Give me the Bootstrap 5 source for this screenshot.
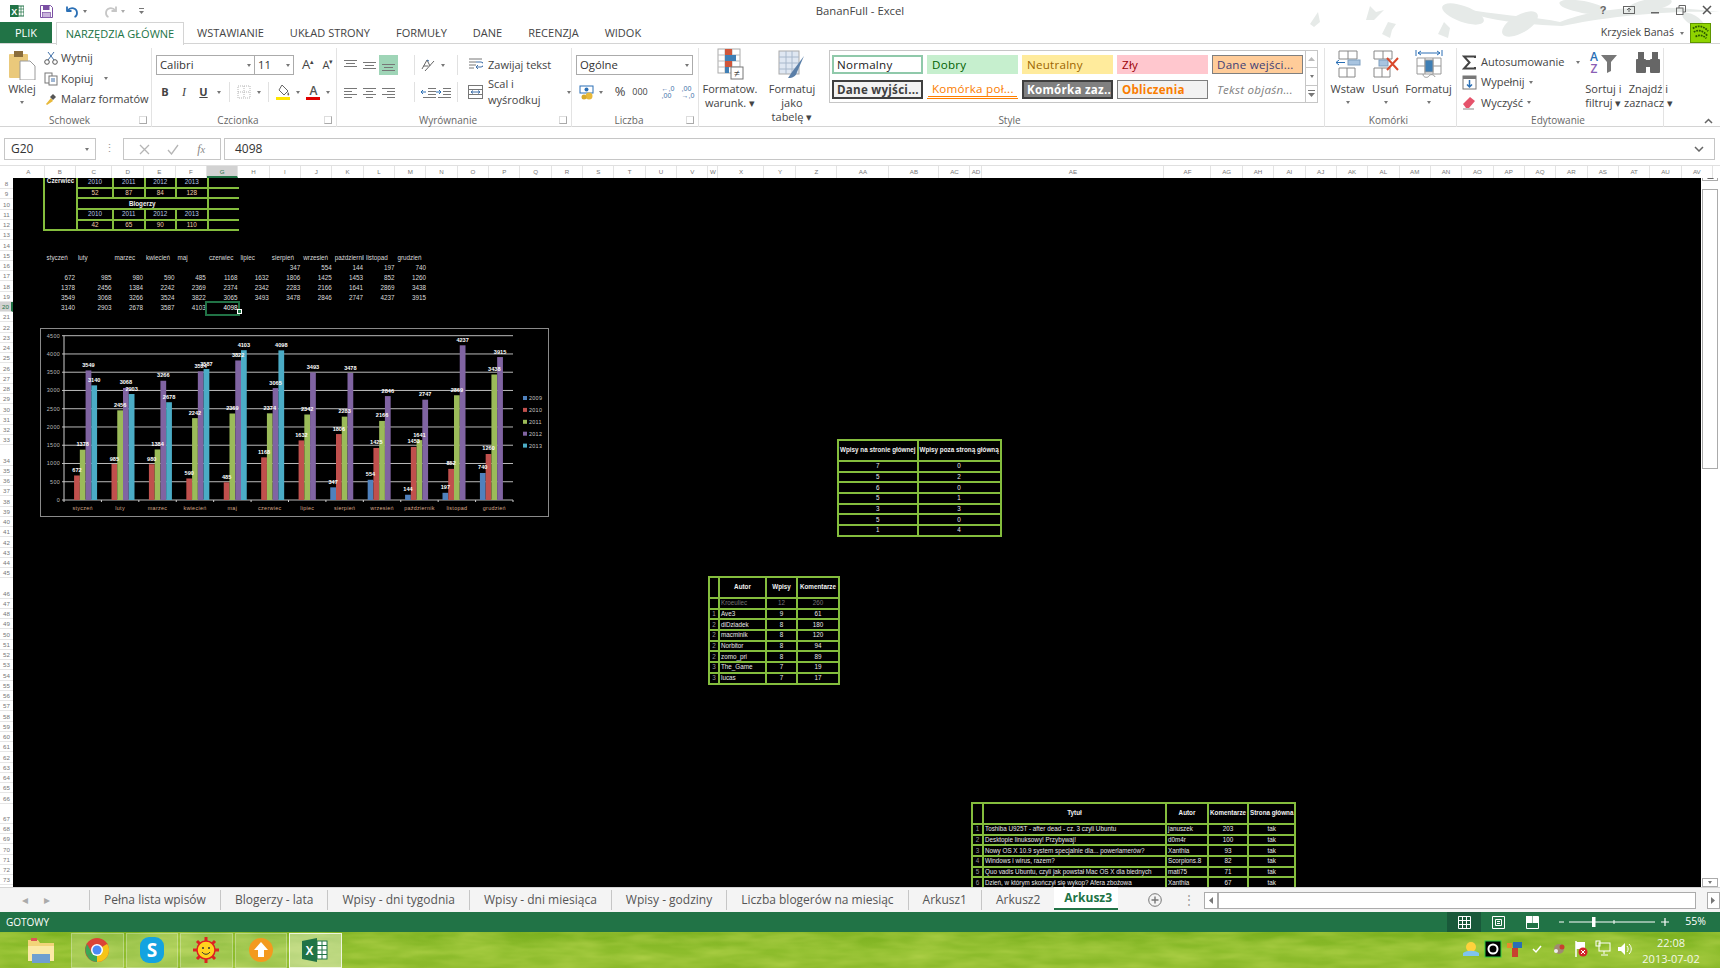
<!DOCTYPE html>
<html lang="pl">
<head>
<meta charset="UTF-8">
<title>BananFull - Excel</title>
<link href="https://cdn.jsdelivr.net/npm/bootstrap@5.3.0/dist/css/bootstrap.min.css" rel="stylesheet">
<style>
html,body{height:100%;overflow:hidden}
body{font-family:"Open Sans","Liberation Sans",sans-serif;font-size:11px;color:#444;background:#fff}
.app{width:1720px;height:968px}
svg{display:block;flex:none}

/* title bar */
.titlebar{height:22px;position:relative}
.leaves{position:absolute;right:0;top:0}
.qat{padding-left:10px;gap:0;position:relative}
.qat svg{margin-right:0}
.doc-title{position:absolute;left:0;right:0;top:3px;text-align:center;font-size:11.3px;color:#444}
.win-btns{position:absolute;right:6px;top:3px;gap:12px}
.win-btns svg{width:14px;height:14px}
.cr{width:0;height:0;border:2.5px solid transparent;border-top:3px solid #777;border-bottom:0;flex:none}
.cr-l{border-top-color:#aaa}

/* ribbon tabs */
.rtabs{height:22px;border-bottom:1px solid #d4d4d4;position:relative;font-size:11px}
.rtab-file{width:52px;background:#217346;color:#fff;text-align:center;line-height:22px;margin-right:4px}
.rtab-on{width:128px;height:23px;background:#fff;border:1px solid #d4d4d4;border-bottom:0;color:#217346;text-align:center;line-height:21px;margin-right:13px}
.rtab{line-height:22px;margin-right:26px;color:#444}
.user{position:absolute;right:9px;top:1px;gap:6px;color:#444;font-size:10.6px}
.avatar{width:21px;height:20px;background:#8fd400;border:1px solid #5f9600}

/* ribbon */
.ribbon{height:83px;border-bottom:1px solid #d4d4d4;font-size:11px}
.rg{height:79px;margin-top:4px;border-right:1px solid #e3e3e3;flex:none}
.rg-body{height:65px;overflow:visible}
.rg-label{height:14px;font-size:10px;line-height:14px;color:#666;padding-right:4px;align-items:center}
.launcher{width:8px;height:8px;border:1px solid #aaa;border-top-color:#ddd;border-left-color:#ddd;flex:none}
.g-clip{width:152px}.g-font{width:185px}.g-align{width:235px}.g-num{width:127px}.g-style{width:626px}.g-cell{width:132px}.g-edit{width:207px}
.bigbtn{line-height:14px;text-align:center;color:#444;align-items:center;flex:none}
.bigbtn svg{margin-bottom:2px}
.bigbtn .cr{margin-top:5px}
.b-paste{width:34px;margin-left:5px}
.b-fmt{width:62px}
.b-ins{width:38px}
.b-cellf{width:48px}
.smalls{margin-left:5px;padding-top:0}
.sm{height:20.5px;gap:3px;align-items:center;white-space:nowrap}
.rows{padding-top:7px;gap:7px;margin-left:4px}
.rrow{height:20px;align-items:center}
.combo{height:20px;border:1px solid #ababab;background:#fff;padding:0 3px;font-size:11.3px;color:#333;align-items:center;justify-content:space-between;flex:none}
.c-font{width:99px}.c-size{width:40px;margin-left:-1px}.c-num{width:117px}
.ic{height:20px;align-items:center;justify-content:center;flex:none;font-size:11px}
.w8{width:8px}.w10{width:10px}.w12{width:12px}.w14{width:14px}.w18{width:18px}.w19{width:19px}.w20{width:20px}.w24{width:24px}.w30{width:30px}
.on{background:#9fd5b7}
.vsep{width:1px;height:20px;background:#e1e1e1;flex:none}
.mx3{margin:0 3px}
.gallery{margin:2px 0 0 6px;width:489px;height:53px;border:1px solid #c6c6c6;flex:none}
.st-grid{display:grid;grid-template-columns:repeat(5,90.5px);grid-template-rows:19px 19px;gap:6px 4.5px;padding:4px 0 0 2px;width:476px}
.st{font-size:11.6px;line-height:17px;padding-left:4px;border:1px solid transparent;white-space:nowrap;overflow:hidden;letter-spacing:.25px}
.st-n{background:#fff;color:#222;border:2px solid #8fc9aa;line-height:15px;padding-left:3px}
.st-good{background:#c6efce;color:#006100}
.st-neu{background:#ffeb9c;color:#9c6500}
.st-bad{background:#ffc7ce;color:#9c0006}
.st-in{background:#ffcc99;color:#3f3f76;border-color:#7f7f7f}
.st-out{background:#f2f2f2;color:#3f3f3f;border:2px solid #3f3f3f;font-weight:700;line-height:15px;padding-left:3px}
.st-link{color:#fa7d00;border-bottom:3px double #ff8001;line-height:16px}
.st-chk{background:#808080;color:#fff;border:2px solid #3f3f3f;font-weight:700;line-height:15px;padding-left:3px}
.st-calc{background:#f2f2f2;color:#fa7d00;border-color:#7f7f7f;font-weight:700}
.st-exp{color:#7f7f7f;font-style:italic}
.scroller{width:12px;border-left:1px solid #c6c6c6;flex:none}
.scroller div{flex:1;border-bottom:1px solid #c6c6c6;align-items:center;justify-content:center}
.scroller div:last-child{border-bottom:0}
.sum{margin-left:5px}
.collapse-r{flex:1;align-items:flex-end;justify-content:flex-end;padding:0 7px 2px 0}

/* formula bar */
.fbar{height:39px;padding:11px 5px 6px 4px;border-bottom:1px solid #e0e0e0}
.fbox{height:22px;border:1px solid #c6c6c6;background:#fff;align-items:center;font-size:12px;color:#333}
.f-name{width:92px;padding:0 6px;justify-content:space-between}
.f-dots{width:27px;justify-content:center;color:#999;letter-spacing:0}
.f-btns{width:98px;justify-content:space-around;padding:0 6px;margin-right:3px;color:#888}
.f-val{flex:1;padding:0 10px;justify-content:space-between}

/* sheet */
.sheet{height:721px}
.colhead{height:12px;font:6.2px "Liberation Sans",sans-serif;color:#777;padding-left:13px;background:#fff}
.colhead div{height:12px;line-height:12px;text-align:center;border-right:1px solid #e3e3e3;flex:none}
.colhead .cur{background:#d2d2d2;border-bottom:2px solid #217346;color:#217346}
.rowhead{width:13px;font:6.2px "Liberation Sans",sans-serif;color:#777;background:#fff;overflow:hidden;flex:none}
.rowhead div{border-bottom:1px solid #e6e6e6;text-align:center;display:flex;align-items:flex-end;justify-content:center;line-height:9px;flex:none}
.rowhead .cur{background:#d2d2d2;border-right:2px solid #217346;color:#217346}
.canvas{flex:1;background:#000;position:relative;overflow:hidden}
.vscroll{width:19px;background:#fff;padding:0 2px 0 1px;flex:none;margin-top:-6px}
.vs-arrow{height:9px;border:1px solid #ababab;align-items:center;justify-content:center;flex:none}
.vs-track{flex:1;padding-top:8px}
.vs-thumb{height:280px;border:1px solid #ababab;background:#fff}

/* tables on the canvas */
.grid-t{position:absolute;table-layout:fixed;width:auto;--bs-table-bg:#000;--bs-table-color:#e8e8e8;--bs-table-border-color:#84bd3d;--bs-border-width:2px;font:6.3px/1 "Liberation Sans",sans-serif;margin:0}
.grid-t.table>:not(caption)>*>*{padding:0 1px;vertical-align:middle;text-align:center;overflow:hidden;white-space:nowrap;box-shadow:none}
.grid-t tr{height:10.7px}
.grid-t .hd{font-weight:700;white-space:normal;color:#f2f2f2}
.grid-t.table>:not(caption)>*>.tl{text-align:left}
.grid-t.table>:not(caption)>*>.idx{color:#999;text-align:center}
.grid-t.table>:not(caption)>*>.dim{color:#777}
.grid-t.table>:not(caption)>*>.y{color:#b9c9e6}
.grid-t.table>:not(caption)>*>.v{color:#f2cfa8}
#t1{left:30px;top:-2px}
#t1 col:nth-child(1){width:33px}
#t1 col:nth-child(2){width:36px}
#t1 col:nth-child(n+3){width:31.5px}
#t2{left:824px;top:261px}
#t2 col{width:51.5px}
#t2 .h{height:21px}
#t3{left:695px;top:398px}
#t3 col:nth-child(1){width:10px}
#t3 col:nth-child(2){width:47px}
#t3 col:nth-child(3){width:31px}
#t3 col:nth-child(4){width:42px}
#t3 .h{height:21px}
#t4{left:958px;top:624px}
#t4 col:nth-child(1){width:11px}
#t4 col:nth-child(2){width:183px}
#t4 col:nth-child(3){width:42px}
#t4 col:nth-child(4){width:39.5px}
#t4 col:nth-child(5){width:27px}
#t4 .h{height:21px}
.data-t{position:absolute;left:31.5px;top:75px;table-layout:fixed;border-collapse:collapse;font:6.3px "Liberation Sans",sans-serif;color:#dcdcdc}
.data-t td{height:10.1px;padding:0 1px;line-height:1;text-align:right;white-space:nowrap;overflow:hidden}
.data-t .m{text-align:left;padding-left:2px}
.data-t .sel{position:relative;outline:2px solid #217346;background:#000}
.data-t .sel{color:#fff}
.chart{position:absolute;left:27px;top:150px}
.handle{position:absolute;left:223.5px;top:131px;width:5px;height:5px;background:#217346;border:1px solid #fff}

/* sheet tabs */
.stabs{height:25px;background:#f4f4f4;font-size:12px;color:#555;border-top:1px solid #d4d4d4}
.s-nav{width:90px;height:20px;margin-top:2px;border-right:1px solid #c6c6c6;color:#aaa;gap:16px;padding-left:22px;align-items:center;flex:none}
.stab{padding:0 14px;height:20px;line-height:20px;margin-top:2px;border-right:1px solid #c6c6c6;white-space:nowrap;flex:none}
.stab-on{height:23px;margin-top:-1px;margin-left:0;padding:0 10px;width:64px;text-align:center;background:#fff;color:#217346;font-weight:700;border-bottom:2px solid #217346;line-height:22px;border-right:0;box-sizing:border-box}
.hs{height:17px;border:1px solid #ababab;background:#fff}
/* status bar */
.status{height:20px;background:#217346;color:#fff;font-size:10px;padding-left:6px;align-items:center}
.status .vw{width:34px;height:20px;align-items:center;justify-content:center;flex:none}
.vw-on{background:#19593a}
/* taskbar */
.taskbar{height:36px;position:relative;overflow:hidden;background:linear-gradient(180deg,#7bb01f,#8dbd2c 55%,#8ab82a)}
.grass{position:absolute;left:0;top:0}
.tb{position:relative;height:36px;padding-left:71px}
.tb-folder{position:absolute;left:27px;top:4px}
.tb-btn{width:52.5px;height:35px;margin:0.5px 2px 0 0;background:rgba(255,255,255,.16);border:1px solid rgba(255,255,255,.28);align-items:center;justify-content:center;flex:none}
.tb-on{background:rgba(255,255,255,.38);border-color:rgba(255,255,255,.75)}
.tray{position:absolute;left:1462px;top:8px;gap:4px;align-items:center}
.tray svg{width:18px;height:18px}
.clock{position:absolute;left:1640px;top:3px;width:62px;color:#f4f8e8;font-size:11px;line-height:16px;text-align:center;white-space:nowrap}
</style>
</head>
<body>
<div class="app d-flex flex-column">

  <!-- title bar -->
  <div class="titlebar">
    <svg class="leaves" width="420" height="44" viewBox="0 0 420 44" fill="#e6eae8">
      <path d="M10 24 18 12 20 22 14 27zM66 20 70 6 76 12 84 10 74 20zM82 34 88 22 96 24 92 30 90 38zM138 34 144 22 150 28 148 38zM322 6 430 14M160 8C200 16 230 16 260 22 290 10 340 2 420 12 360 10 300 18 262 26 220 24 180 20 160 8z"/>
      <ellipse cx="163" cy="14" rx="22" ry="8" transform="rotate(20 163 14)"/>
      <ellipse cx="220" cy="24" rx="20" ry="9" transform="rotate(-30 220 24)"/>
      <ellipse cx="283" cy="7" rx="24" ry="6" transform="rotate(10 283 7)"/>
      <ellipse cx="350" cy="5" rx="22" ry="6" transform="rotate(-10 350 5)"/>
      <ellipse cx="393" cy="20" rx="12" ry="5" transform="rotate(30 393 20)"/>
    </svg>
    <div class="qat d-flex align-items-center h-100">
      <svg width="14" height="14" viewBox="0 0 14 14"><rect x="4" y="2" width="10" height="10" fill="#fff" stroke="#217346"/><path d="M8 2v10M11 2v10M4 5h10M4 8h10" stroke="#217346" stroke-width=".7"/><rect y="1" width="8.5" height="12" fill="#217346"/><text x="4.2" y="10.5" font-size="9" font-weight="700" fill="#fff" text-anchor="middle" font-family="Liberation Sans">X</text></svg>
      <svg class="ms-3" style="margin-left:12px" width="13" height="13" viewBox="0 0 13 13"><path d="M.5.5h10l2 2v10H.5z" fill="#fff" stroke="#7a4fa3"/><rect x="3" y=".5" width="6.5" height="4.5" fill="#7a4fa3"/><rect x="2.5" y="7.5" width="8" height="5" fill="#c9b5dc" stroke="#7a4fa3" stroke-width=".7"/></svg>
      <svg style="margin-left:13px" width="13" height="13" viewBox="0 0 13 13" fill="none" stroke="#2a6fb5" stroke-width="1.8"><path d="M1.5 5.5C5 1.5 11 3 11 8c0 2-1 3.500-2.500 4"/><path d="M1 1.500v4.500h4.500" stroke-linejoin="round"/></svg>
      <span class="cr ms-1"></span>
      <svg style="margin-left:17px" width="13" height="13" viewBox="0 0 13 13" fill="none" stroke="#c6c6c6" stroke-width="1.8"><path d="M11.500 5.500C8 1.500 2 3 2 8c0 2 1 3.500 2.500 4"/><path d="M12 1.500v4.500H7.500"/></svg>
      <span class="cr cr-l ms-1"></span>
      <svg style="margin-left:13px" width="7" height="8" viewBox="0 0 7 8" fill="#777"><rect x="1" y="1" width="5" height="1"/><path d="M1 4h5L3.500 7z"/></svg>
    </div>
    <div class="doc-title">BananFull - Excel</div>
    <div class="win-btns d-flex">
      <svg viewBox="0 0 14 14"><text x="7" y="11" font-size="11" font-weight="700" fill="#666" text-anchor="middle" font-family="Liberation Sans">?</text></svg>
      <svg viewBox="0 0 14 14" fill="none" stroke="#666"><rect x="1.500" y="3.500" width="11" height="7"/><path d="M7 9V5.500M5 7l2-2 2 2"/></svg>
      <svg viewBox="0 0 14 14"><rect x="3" y="9" width="8" height="1.500" fill="#666"/></svg>
      <svg viewBox="0 0 14 14" fill="none" stroke="#666"><rect x="2.500" y="5" width="6.500" height="6.500"/><path d="M5 5V2.500h6.500V9H9"/></svg>
      <svg viewBox="0 0 14 14" stroke="#555" stroke-width="1.500"><path d="M3 3l8 8M11 3l-8 8"/></svg>
    </div>
  </div>

  <!-- ribbon tabs -->
  <div class="rtabs d-flex">
    <div class="rtab-file">PLIK</div>
    <div class="rtab-on">NARZĘDZIA GŁÓWNE</div>
    <div class="rtab">WSTAWIANIE</div>
    <div class="rtab">UKŁAD STRONY</div>
    <div class="rtab">FORMUŁY</div>
    <div class="rtab">DANE</div>
    <div class="rtab">RECENZJA</div>
    <div class="rtab">WIDOK</div>
    <div class="user d-flex align-items-center">Krzysiek Banaś <span class="cr"></span>
      <svg class="avatar" viewBox="0 0 21 20"><path d="M2 5c5-4 12-3 17 3M3 9c5-3 10-2 15 4M5 14c4-2 8-2 12 2" stroke="#2d5a00" stroke-width="2" fill="none" stroke-dasharray="2 1"/></svg>
    </div>
  </div>

  <!-- ribbon -->
  <div class="ribbon d-flex">
    <section class="rg g-clip d-flex flex-column">
      <div class="rg-body d-flex">
        <div class="bigbtn b-paste d-flex flex-column">
          <svg width="28" height="32" viewBox="0 0 28 32"><rect x="1" y="6" width="19" height="24" rx="1" fill="#eac97b"/><rect x="6" y="3" width="9" height="6" fill="#8a6d3b"/><path d="M12 13h10l5 5v14H12z" fill="#fff" stroke="#9a9a9a"/></svg>
          Wklej<span class="cr"></span>
        </div>
        <div class="smalls d-flex flex-column">
          <div class="sm d-flex"><svg width="14" height="14" viewBox="0 0 14 14" fill="none" stroke="#555"><path d="M4 1l6 8M10 1L4 9" stroke="#3f6fa8"/><circle cx="3" cy="11" r="2.300"/><circle cx="11" cy="11" r="2.300"/></svg>Wytnij</div>
          <div class="sm d-flex"><svg width="14" height="14" viewBox="0 0 14 14" fill="#fff" stroke="#777"><rect x="1" y="1" width="7" height="10"/><rect x="5" y="4" width="8" height="9"/><path d="M7 7h4M7 9h4" stroke="#3f6fa8"/></svg>Kopiuj<span class="cr ms-2"></span></div>
          <div class="sm d-flex"><svg width="14" height="14" viewBox="0 0 14 14"><path d="M7 6l-5 6 1 1 6-4z" fill="#e8b93a"/><path d="M6 5l3-3 3 3-3 3z" fill="#555"/></svg>Malarz formatów</div>
        </div>
      </div>
      <div class="rg-label d-flex"><span class="flex-grow-1 text-center">Schowek</span><span class="launcher"></span></div>
    </section>

    <section class="rg g-font d-flex flex-column">
      <div class="rg-body rows d-flex flex-column">
        <div class="rrow d-flex">
          <div class="combo c-font d-flex">Calibri<span class="cr"></span></div>
          <div class="combo c-size d-flex">11<span class="cr"></span></div>
          <div class="ic w20 d-flex ms-1" style="font-size:13px">A<sup style="font-size:7px">▴</sup></div>
          <div class="ic w20 d-flex" style="font-size:11px">A<sup style="font-size:7px">▾</sup></div>
        </div>
        <div class="rrow d-flex">
          <div class="ic w18 d-flex fw-bold">B</div>
          <div class="ic w20 d-flex fst-italic" style="font-family:'Liberation Serif',serif;font-size:12px">I</div>
          <div class="ic w19 d-flex fw-bold text-decoration-underline">U</div>
          <div class="ic w12 d-flex"><span class="cr"></span></div>
          <div class="vsep mx-1"></div>
          <div class="ic w20 d-flex"><svg width="14" height="14" viewBox="0 0 14 14" fill="none" stroke="#b5b5b5" stroke-dasharray="1 1"><rect x="1" y="1" width="12" height="12"/><path d="M7 1v12M1 7h12"/></svg></div>
          <div class="ic w10 d-flex"><span class="cr"></span></div>
          <div class="vsep mx-1"></div>
          <div class="ic w20 d-flex"><svg width="15" height="16" viewBox="0 0 15 16"><path d="M6 1l6 6-4 4-5-5z" fill="#fff" stroke="#666"/><path d="M12 8c1.500 2 1.500 3 .5 3.500S11 10 12 8z" fill="#666"/><rect y="13" width="14" height="3" fill="#ffe500"/></svg></div>
          <div class="ic w10 d-flex"><span class="cr"></span></div>
          <div class="ic w20 d-flex"><svg width="15" height="16" viewBox="0 0 15 16"><text x="7.500" y="11" font-size="12" font-weight="600" fill="#555" text-anchor="middle" font-family="Open Sans">A</text><rect y="13" width="14" height="3" fill="#e00000"/></svg></div>
          <div class="ic w10 d-flex"><span class="cr"></span></div>
        </div>
      </div>
      <div class="rg-label d-flex"><span class="flex-grow-1 text-center">Czcionka</span><span class="launcher"></span></div>
    </section>

    <section class="rg g-align d-flex flex-column">
      <div class="rg-body rows d-flex flex-column">
        <div class="rrow d-flex">
          <div class="ic w19 d-flex"><svg width="13" height="12" viewBox="0 0 13 12" stroke="#777"><path d="M0 1.500h13M2 4.500h9M0 7.500h13"/></svg></div>
          <div class="ic w19 d-flex"><svg width="13" height="12" viewBox="0 0 13 12" stroke="#777"><path d="M0 3.500h13M2 6.500h9M0 9.500h13"/></svg></div>
          <div class="ic w19 d-flex on"><svg width="13" height="12" viewBox="0 0 13 12" stroke="#777"><path d="M0 5.500h13M2 8.500h9M0 11.500h13"/></svg></div>
          <div class="ic w12 d-flex"></div>
          <div class="vsep mx-1"></div>
          <div class="ic w18 d-flex"><svg width="15" height="14" viewBox="0 0 15 14" fill="none" stroke="#666"><path d="M1 11l5-9 3 6M2.500 8h5M13 3L4 13"/><path d="M6 2l2 1M4 6h0" stroke="#3f6fa8"/></svg></div>
          <div class="ic w12 d-flex"><span class="cr"></span></div>
          <div class="vsep mx-2"></div>
          <div class="ic w18 d-flex"><svg width="15" height="14" viewBox="0 0 15 14" fill="none" stroke="#777"><path d="M1 1h13M1 4h7M1 7h7M1 10h5"/><path d="M8 4h5a2 2 0 010 5H8m2-2-2 2 2 2" stroke="#3f6fa8"/></svg></div>
          <span class="ms-1">Zawijaj tekst</span>
        </div>
        <div class="rrow d-flex">
          <div class="ic w19 d-flex"><svg width="13" height="11" viewBox="0 0 13 11" stroke="#777"><path d="M0 1.500h13M0 4.500h8M0 7.500h13M0 10.500h8"/></svg></div>
          <div class="ic w19 d-flex"><svg width="13" height="11" viewBox="0 0 13 11" stroke="#777"><path d="M0 1.500h13M3 4.500h7M0 7.500h13M3 10.500h7"/></svg></div>
          <div class="ic w19 d-flex"><svg width="13" height="11" viewBox="0 0 13 11" stroke="#777"><path d="M0 1.500h13M5 4.500h8M0 7.500h13M5 10.500h8"/></svg></div>
          <div class="ic w12 d-flex"></div>
          <div class="vsep mx-1"></div>
          <div class="ic w18 d-flex"><svg width="15" height="11" viewBox="0 0 15 11" fill="none" stroke="#777"><path d="M7 1.500h8M7 4.500h8M7 7.500h8M2 10.500h13"/><path d="M5 5H0m2-2L0 5l2 2" stroke="#2a6fb5"/></svg></div>
          <div class="ic w12 d-flex"><svg width="15" height="11" viewBox="0 0 15 11" fill="none" stroke="#777"><path d="M7 1.500h8M7 4.500h8M7 7.500h8M2 10.500h13"/><path d="M0 5h5M3 3l2 2-2 2" stroke="#2a6fb5"/></svg></div>
          <div class="vsep mx-2"></div>
          <div class="ic w18 d-flex"><svg width="15" height="14" viewBox="0 0 15 14" fill="#fff" stroke="#777"><rect x=".5" y=".5" width="14" height="13"/><path d="M.5 4.500h14M.5 9.500h14"/><path d="M3 7h9M5 5.500L3 7l2 1.500M10 5.500L12 7l-2 1.500" stroke="#3f6fa8" fill="none"/></svg></div>
          <span class="ms-1">Scal i wyśrodkuj</span><span class="cr ms-2"></span>
        </div>
      </div>
      <div class="rg-label d-flex"><span class="flex-grow-1 text-center">Wyrównanie</span><span class="launcher"></span></div>
    </section>

    <section class="rg g-num d-flex flex-column">
      <div class="rg-body rows d-flex flex-column">
        <div class="rrow d-flex"><div class="combo c-num d-flex">Ogólne<span class="cr"></span></div></div>
        <div class="rrow d-flex">
          <div class="ic w20 d-flex"><svg width="15" height="15" viewBox="0 0 15 15"><rect x="1" y="1" width="13" height="7" fill="#fff" stroke="#2a6fb5"/><circle cx="7.500" cy="4.500" r="2" fill="#2a6fb5"/><circle cx="10" cy="11" r="3.500" fill="#e8b93a"/><circle cx="5" cy="12" r="2.500" fill="#d8a92a"/></svg></div>
          <div class="ic w10 d-flex"><span class="cr"></span></div>
          <div class="ic w20 d-flex ms-1" style="font-size:13px">%</div>
          <div class="ic w20 d-flex" style="font-size:9px">000</div>
          <div class="ic w8 d-flex"></div>
          <div class="ic w20 d-flex" style="font:7px/7px 'Liberation Sans',sans-serif;color:#3f6fa8;flex-direction:column">←,0<br>,00</div>
          <div class="ic w20 d-flex" style="font:7px/7px 'Liberation Sans',sans-serif;color:#3f6fa8;flex-direction:column">,00<br>→,0</div>
        </div>
      </div>
      <div class="rg-label d-flex"><span class="flex-grow-1 text-center">Liczba</span><span class="launcher"></span></div>
    </section>

    <section class="rg g-style d-flex flex-column">
      <div class="rg-body d-flex">
        <div class="bigbtn b-fmt d-flex flex-column">
          <svg width="27" height="32" viewBox="0 0 27 32"><rect x="1" y="1" width="22" height="24" fill="#fff" stroke="#aaa"/><path d="M8 1v24M15 1v24M1 7h22M1 13h22M1 19h22" stroke="#bbb" fill="none"/><rect x="8" y="1" width="7" height="6" fill="#d0563a"/><rect x="8" y="7" width="11" height="6" fill="#3f7fb5"/><rect x="8" y="13" width="7" height="6" fill="#d0563a"/><rect x="8" y="19" width="4" height="6" fill="#3f7fb5"/><rect x="14" y="19" width="12" height="12" fill="#fff" stroke="#777"/><text x="20" y="29" font-size="10" fill="#444" text-anchor="middle" font-family="Liberation Sans">≠</text></svg>
          <span>Formatow.</span><span>warunk. ▾</span>
        </div>
        <div class="bigbtn b-fmt d-flex flex-column">
          <svg width="28" height="32" viewBox="0 0 28 32"><rect x="1" y="3" width="20" height="23" fill="#dfe7f2" stroke="#aaa"/><path d="M8 3v23M14 3v23M1 9h20M1 15h20M1 21h20" stroke="#a8b8cc" fill="none"/><path d="M26 8L14 24l-4 6c5 0 8-2 9-6z" fill="#5b7fa8"/></svg>
          <span>Formatuj jako</span><span>tabelę ▾</span>
        </div>
        <div class="gallery d-flex">
          <div class="st-grid">
            <div class="st st-n">Normalny</div><div class="st st-good">Dobry</div><div class="st st-neu">Neutralny</div><div class="st st-bad">Zły</div><div class="st st-in">Dane wejści...</div>
            <div class="st st-out">Dane wyjści...</div><div class="st st-link">Komórka poł...</div><div class="st st-chk">Komórka zaz...</div><div class="st st-calc">Obliczenia</div><div class="st st-exp">Tekst objaśn...</div>
          </div>
          <div class="scroller d-flex flex-column ms-auto">
            <div class="d-flex"><svg width="7" height="4" viewBox="0 0 7 4" fill="#bbb"><path d="M0 4l3.500-4L7 4z"/></svg></div>
            <div class="d-flex"><span class="cr"></span></div>
            <div class="d-flex"><svg width="7" height="7" viewBox="0 0 7 7" fill="#777"><rect width="7" height="1"/><path d="M0 3h7L3.500 7z"/></svg></div>
          </div>
        </div>
      </div>
      <div class="rg-label d-flex justify-content-center">Style</div>
    </section>

    <section class="rg g-cell d-flex flex-column">
      <div class="rg-body d-flex justify-content-center gap-0">
        <div class="bigbtn b-ins d-flex flex-column">
          <svg width="26" height="32" viewBox="0 0 26 32" fill="none" stroke="#888"><path d="M4 3h18v8H4zM13 3v8M4 20h16v9H4zM12 20v9"/><rect x="13" y="12" width="12" height="5" fill="#a8c4e0" stroke="#7f9fc0"/><path d="M1 14.500h9M4 12l-3 2.500 3 2.500" stroke="#2a6fb5"/></svg>
          Wstaw<span class="cr"></span>
        </div>
        <div class="bigbtn b-ins d-flex flex-column">
          <svg width="28" height="32" viewBox="0 0 28 32" fill="none" stroke="#888"><path d="M2 3h18v8H2zM11 3v8M2 20h16v9H2zM10 20v9"/><rect x="7" y="12" width="9" height="6" fill="#a8c4e0" stroke="#7f9fc0"/><path d="M15 10l11 12M26 10L15 22" stroke="#d9482b" stroke-width="2"/></svg>
          Usuń<span class="cr"></span>
        </div>
        <div class="bigbtn b-cellf d-flex flex-column">
          <svg width="28" height="32" viewBox="0 0 28 32" fill="none" stroke="#999"><path d="M1 2v6M27 2v6M3 5h22M3 5l3-2M3 5l3 2M25 5l-3-2M25 5l-3 2" stroke="#2a6fb5"/><path d="M2 10h24v16H2zM10 10v16M18 10v16M2 18h24"/><rect x="10" y="12" width="8" height="12" fill="#3f7fb5"/><path d="M8 26c0 4 5 4 6 2s5-2 6 1" /></svg>
          Formatuj<span class="cr"></span>
        </div>
      </div>
      <div class="rg-label d-flex justify-content-center">Komórki</div>
    </section>

    <section class="rg g-edit d-flex flex-column">
      <div class="rg-body d-flex">
        <div class="smalls sum d-flex flex-column" style="width:121px;padding-top:4px">
          <div class="sm d-flex" style="gap:4px"><svg width="15" height="15" viewBox="0 0 15 15" fill="none" stroke="#444" stroke-width="2"><path d="M13 3V1.500H2l5.500 6L2 13.500h11V12"/></svg>Autosumowanie<span class="cr ms-2"></span></div>
          <div class="sm d-flex" style="gap:4px"><svg width="15" height="15" viewBox="0 0 15 15"><rect x="1" y="1" width="13" height="13" fill="#fff" stroke="#777"/><rect x="1" y="1" width="13" height="3" fill="#777"/><path d="M7.500 5v7M5 9.500l2.500 2.500L10 9.500" stroke="#2a6fb5" stroke-width="1.500" fill="none"/></svg>Wypełnij<span class="cr"></span></div>
          <div class="sm d-flex" style="gap:4px"><svg width="15" height="15" viewBox="0 0 15 15"><path d="M1 9l7-7 5 4-6 7H4z" fill="#e5536b"/><path d="M1 14h11" stroke="#888"/></svg>Wyczyść<span class="cr"></span></div>
        </div>
        <div class="bigbtn d-flex flex-column w-auto" style="width:46px">
          <svg width="30" height="32" viewBox="0 0 30 32"><text x="6" y="13" font-size="12" font-weight="600" fill="#2a6fb5" text-anchor="middle" font-family="Open Sans">A</text><text x="6" y="25" font-size="12" font-weight="600" fill="#8a5fb5" text-anchor="middle" font-family="Open Sans">Z</text><path d="M13 7h16l-6 7v9l-4 2V14z" fill="#777"/></svg>
          <span style="width:46px">Sortuj i</span><span class="text-nowrap">filtruj ▾</span>
        </div>
        <div class="bigbtn d-flex flex-column" style="width:44px;margin-left:0">
          <svg width="26" height="32" viewBox="0 0 26 32" fill="#666"><rect x="1" y="11" width="10" height="14" rx="1"/><rect x="15" y="11" width="10" height="14" rx="1"/><rect x="3" y="4" width="6" height="8"/><rect x="17" y="4" width="6" height="8"/><rect x="10" y="12" width="6" height="7"/></svg>
          <span class="text-nowrap">Znajdź i</span><span class="text-nowrap">zaznacz ▾</span>
        </div>
      </div>
      <div class="rg-label d-flex justify-content-center">Edytowanie</div>
    </section>

    <div class="collapse-r d-flex"><svg width="9" height="6" viewBox="0 0 9 6" fill="none" stroke="#666" stroke-width="1.500"><path d="M1 5l3.500-3.500L8 5"/></svg></div>
  </div>

  <!-- formula bar -->
  <div class="fbar d-flex">
    <div class="fbox f-name d-flex">G20<span class="cr"></span></div>
    <div class="f-dots d-flex align-items-center">⋮</div>
    <div class="fbox f-btns d-flex">
      <svg width="11" height="11" viewBox="0 0 11 11" stroke="#b5b5b5" stroke-width="1.300"><path d="M1 1l9 9M10 1l-9 9"/></svg>
      <svg width="12" height="11" viewBox="0 0 12 11" fill="none" stroke="#b5b5b5" stroke-width="1.300"><path d="M1 6l3.500 4L11 1"/></svg>
      <span class="fst-italic" style="font-family:'Liberation Serif',serif">f<small>x</small></span>
    </div>
    <div class="fbox f-val d-flex">4098<svg width="10" height="6" viewBox="0 0 10 6" fill="none" stroke="#666" stroke-width="1.500"><path d="M1 1l4 4 4-4"/></svg></div>
  </div>

  <!-- sheet -->
  <div class="sheet d-flex flex-column">
    <div class="colhead d-flex" id="colhead"></div>
    <div class="d-flex flex-grow-1 overflow-hidden">
      <div class="rowhead d-flex flex-column" id="rowhead"></div>
      <div class="canvas" id="canvas">
        <table class="table table-bordered grid-t" id="t1">
          <colgroup><col><col><col><col><col><col></colgroup>
          <tbody>
            <tr><td rowspan="5" class="hd align-top">Czerwiec</td><td class="y">2010</td><td class="y">2011</td><td class="y">2012</td><td class="y">2013</td></tr>
            <tr><td class="v">52</td><td class="v">87</td><td class="v">84</td><td class="v">128</td></tr>
            <tr><td colspan="4" class="hd">Blogerzy</td></tr>
            <tr><td class="y">2010</td><td class="y">2011</td><td class="y">2012</td><td class="y">2013</td></tr>
            <tr><td class="v">42</td><td class="v">65</td><td class="v">90</td><td class="v">110</td></tr>
          </tbody>
        </table>
        <table class="data-t" id="dataT"></table>
        <div class="handle"></div>
        <svg class="chart" id="chart" width="509" height="189" viewBox="0 0 509 189"></svg>
        <table class="table table-bordered grid-t" id="t2"><colgroup><col><col></colgroup><tbody id="t2b"></tbody></table>
        <table class="table table-bordered grid-t" id="t3"><colgroup><col><col><col><col></colgroup><tbody id="t3b"></tbody></table>
        <table class="table table-bordered grid-t" id="t4"><colgroup><col><col><col><col><col></colgroup><tbody id="t4b"></tbody></table>
      </div>
      <div class="vscroll d-flex flex-column">
        <div class="vs-arrow d-flex"><svg width="7" height="4" viewBox="0 0 7 4" fill="#666"><path d="M0 4l3.500-4L7 4z"/></svg></div>
        <div class="vs-track d-flex flex-column"><div class="vs-thumb"></div></div>
        <div class="vs-arrow d-flex"><span class="cr"></span></div>
      </div>
    </div>
  </div>

  <!-- sheet tabs -->
  <div class="stabs d-flex">
    <div class="s-nav d-flex"><span>◂</span><span>▸</span></div>
    <div class="stab">Pełna lista wpisów</div>
    <div class="stab">Blogerzy - lata</div>
    <div class="stab">Wpisy - dni tygodnia</div>
    <div class="stab">Wpisy - dni miesiąca</div>
    <div class="stab">Wpisy - godziny</div>
    <div class="stab">Liczba blogerów na miesiąc</div>
    <div class="stab">Arkusz1</div>
    <div class="stab border-0">Arkusz2</div>
    <div class="stab stab-on">Arkusz3</div>
    <svg class="ms-4 align-self-center" style="margin-left:30px!important" width="14" height="14" viewBox="0 0 14 14" fill="none" stroke="#777"><circle cx="7" cy="7" r="6.300"/><path d="M7 3.500v7M3.500 7h7" stroke-width="1.400"/></svg>
    <span class="align-self-center" style="margin-left:21px;color:#999">⋮</span>
    <div class="hs d-flex align-self-center align-items-center justify-content-center" style="width:14px;margin-left:9px"><svg width="4" height="7" viewBox="0 0 4 7" fill="#777"><path d="M4 0L0 3.500 4 7z"/></svg></div>
    <div class="hs align-self-center" style="width:513px"></div>
    <div class="hs d-flex align-self-center align-items-center justify-content-center" style="width:14px;margin-left:11px"><svg width="4" height="7" viewBox="0 0 4 7" fill="#777"><path d="M0 0l4 3.500L0 7z"/></svg></div>
  </div>

  <!-- status bar -->
  <div class="status d-flex">
    <span class="me-auto">GOTOWY</span>
    <div class="vw vw-on d-flex"><svg width="13" height="13" viewBox="0 0 13 13" fill="none" stroke="#fff"><path d="M.5.5h12v12H.5zM4.500.5v12M8.500.5v12M.5 4.500h12M.5 8.500h12"/></svg></div>
    <div class="vw d-flex"><svg width="13" height="13" viewBox="0 0 13 13" fill="none" stroke="#fff"><path d="M.5.5h12v12H.5zM3.500 3.500h6v6h-6zM5 5.500h3M5 7.500h3"/></svg></div>
    <div class="vw d-flex"><svg width="13" height="13" viewBox="0 0 13 13" fill="#fff" stroke="#fff"><path d="M.5 7V12.500h12V.5" fill="none"/><rect x=".5" y=".5" width="5" height="6"/><rect x="7" y=".5" width="5" height="6"/></svg></div>
    <svg class="ms-2" width="112" height="20" viewBox="0 0 112 20"><path d="M2 10h5M12 10h86M104 10h8M108 6v8" stroke="#fff" stroke-width="1.200"/><rect x="35" y="5" width="3.500" height="10" fill="#fff"/><path d="M57 8v4" stroke="#fff"/></svg>
    <span class="ms-3 me-2" style="font-size:10.5px;margin-right:14px!important">55%</span>
  </div>

  <!-- taskbar -->
  <div class="taskbar">
    <svg class="grass" width="1720" height="36"><filter id="g"><feTurbulence type="fractalNoise" baseFrequency=".02 .09" numOctaves="3" seed="4"/><feColorMatrix values="0 0 0 0 .55 0 0 0 0 .72 0 0 0 0 .1 .9 0 0 0 -.25"/></filter><rect width="1720" height="36" filter="url(#g)"/></svg>
    <div class="tb d-flex">
      <svg class="tb-folder" width="28" height="28" viewBox="0 0 28 28"><path d="M1 4h10l2 3h14v18H1z" fill="#f2d479"/><path d="M1 10h26v15H1z" fill="#fbe9a6"/><path d="M5 18h18v9H5z" fill="#6f9fd0"/><rect x="4" y="2" width="6" height="3" fill="#d55"/></svg>
      <div class="tb-btn d-flex"><svg width="26" height="26" viewBox="0 0 26 26"><circle cx="13" cy="13" r="12" fill="#db4437"/><path d="M13 13L3 19A12 12 0 0013 25z" fill="#3aa757"/><path d="M13 13L3 19A12 12 0 0 1 3 7l5 9z" fill="#3aa757"/><path d="M13 13v12a12 12 0 0 0 12-12c0-3-1-5-2-6z" fill="#f5c518"/><circle cx="13" cy="13" r="6" fill="#fff"/><circle cx="13" cy="13" r="4.500" fill="#4b8bf5"/></svg></div>
      <div class="tb-btn d-flex"><svg width="26" height="28" viewBox="0 0 26 28"><rect x="1" y="1" width="24" height="26" rx="9" fill="#14a3e0"/><text x="13" y="21" font-size="19" font-weight="700" fill="#fff" text-anchor="middle" font-family="Open Sans">S</text></svg></div>
      <div class="tb-btn d-flex"><svg width="28" height="28" viewBox="0 0 28 28"><g stroke="#d22" stroke-width="3"><path d="M14 1v26M1 14h26M5 5l18 18M23 5L5 23"/></g><circle cx="14" cy="14" r="9" fill="#ffd21e" stroke="#d22" stroke-width="1.500"/><circle cx="11" cy="12" r="1" fill="#333"/><circle cx="17" cy="12" r="1" fill="#333"/><path d="M10 16c2 3 6 3 8 0" stroke="#333" fill="none"/></svg></div>
      <div class="tb-btn d-flex"><svg width="26" height="26" viewBox="0 0 26 26"><circle cx="13" cy="13" r="12" fill="#f39a1f"/><path d="M13 5l7 8h-4v7h-6v-7H6z" fill="#fff"/></svg></div>
      <div class="tb-btn tb-on d-flex"><svg width="26" height="24" viewBox="0 0 26 24"><rect x="10" y="3" width="15" height="18" fill="#fff" stroke="#217346"/><path d="M15 3v18M20 3v18M10 7.500h15M10 12h15M10 16.500h15" stroke="#217346"/><path d="M0 3l15-3v24L0 21z" fill="#217346"/><text x="7.500" y="17" font-size="12" font-weight="700" fill="#fff" text-anchor="middle" font-family="Liberation Sans">X</text></svg></div>
    </div>
    <div class="tray d-flex">
      <svg viewBox="0 0 18 18"><circle cx="9" cy="7" r="5" fill="#ffd23c"/><path d="M1 13c4-3 12-3 16 0v3H1z" fill="#7fc4ee"/></svg>
      <svg viewBox="0 0 18 18"><rect x="1" y="1" width="16" height="16" fill="#000" stroke="#2ecc40"/><circle cx="9" cy="9" r="4.500" fill="none" stroke="#fff" stroke-width="2"/></svg>
      <svg viewBox="0 0 18 18"><rect x="1" y="3" width="5" height="5" fill="#e8892b"/><rect x="7" y="2" width="9" height="6" fill="#2a6fb5"/><rect x="6" y="8" width="6" height="9" fill="#c8402f"/></svg>
      <svg viewBox="0 0 18 18" fill="none" stroke="#fff" stroke-width="1.500"><path d="M5 9l3 3 5-6"/></svg>
      <svg viewBox="0 0 18 18"><circle cx="9" cy="9" r="5" fill="#a08a70"/><circle cx="12" cy="7" r="2.500" fill="#c8402f"/><circle cx="6" cy="11" r="2" fill="#eee"/></svg>
      <svg viewBox="0 0 18 18"><path d="M4 1v16" stroke="#fff" stroke-width="1.500"/><path d="M4 2h9v7H4z" fill="#fff"/><circle cx="11" cy="12" r="4.500" fill="#d2232a"/><path d="M9 10l4 4m0-4l-4 4" stroke="#fff"/></svg>
      <svg viewBox="0 0 18 18" fill="none" stroke="#fff"><rect x="5" y="3" width="11" height="8"/><rect x="2" y="1" width="4" height="5"/><path d="M10 11v3M7 15h7"/></svg>
      <svg viewBox="0 0 18 18" fill="#fff"><path d="M2 7h3l4-4v12l-4-4H2z"/><path d="M11 6c1.500 2 1.500 4 0 6M13 4c3 3 3 7 0 10" fill="none" stroke="#fff"/></svg>
    </div>
    <div class="clock">22:08<br>2013-07-02</div>
  </div>
</div>

<script src="https://cdn.jsdelivr.net/npm/bootstrap@5.3.0/dist/js/bootstrap.bundle.min.js"></script>
<script>
  // column headers
  const colW = {A:31.6,B:31.4,C:36.5,D:31.5,E:31.7,F:31.3,W:10,X:46,Y:32,Z:41,AA:52,AB:50,AC:31,AD:12,AE:182,AF:47};
  const colNames = [];
  for (let i = 0; i < 26; i++) colNames.push(String.fromCharCode(65 + i));
  for (let i = 0; i < 22; i++) colNames.push('A' + String.fromCharCode(65 + i));
  document.getElementById('colhead').innerHTML = colNames.map(c =>
    `<div class="${c === 'G' ? 'cur' : ''}" style="width:${colW[c] || 31.35}px">${c}</div>`).join('');

  // row headers, 34, 46 and 67 are the tall ones
  let rowsHtml = '';
  for (let r = 8; r <= 74; r++) {
    const h = [34, 46, 67].includes(r) ? 20.26 : (r === 8 ? 11 : 10.26);
    rowsHtml += `<div class="${r === 20 ? 'cur' : ''}" style="height:${h}px">${r}</div>`;
  }
  document.getElementById('rowhead').innerHTML = rowsHtml;

  // month table
  const months = ['styczeń','luty','marzec','kwiecień','maj','czerwiec','lipiec','sierpień','wrzesień','październik','listopad','grudzień'];
  const s2009 = [0,0,0,0,0,0,0,347,554,144,197,740];
  const s2010 = [672,985,980,590,485,1168,1632,1806,1425,1453,852,1260];
  const s2011 = [1378,2456,1384,2242,2369,2374,2342,2283,2166,1641,2869,3438];
  const s2012 = [3549,3068,3266,3524,3822,3065,3493,3478,2846,2747,4237,3915];
  const s2013 = [3140,2903,2678,3587,4103,4098,0,0,0,0,0,0];
  const widths = [31.4,36.5,31.5,31.7,31.3,31.6,31.4,31.4,31.4,31.4,31.4,31.4];
  const cell = v => `<td>${v || ''}</td>`;
  let dt = '<colgroup>' + widths.map(w => `<col style="width:${w}px">`).join('') + '</colgroup>';
  dt += '<tr>' + months.map(m => `<td class="m">${m}</td>`).join('') + '</tr>';
  [s2009, s2010, s2011, s2012].forEach(s => { dt += '<tr>' + s.map(cell).join('') + '</tr>'; });
  dt += '<tr>' + s2013.map((v, i) => i === 5 ? `<td class="sel">${v}</td>` : cell(v)).join('') + '</tr>';
  const dataT = document.getElementById('dataT');
  dataT.innerHTML = dt;
  dataT.style.width = widths.reduce((a, b) => a + b, 0) + 'px';

  // chart
  const x0 = 24, x1 = 473, yZero = 172, perUnit = 164.3 / 4500;
  const groupW = (x1 - x0) / 12, barW = 5.75, pad = (groupW - barW * 5) / 2;
  const series = [[s2009,'#4f81bd'],[s2010,'#c0504d'],[s2011,'#9bbb59'],[s2012,'#8064a2'],[s2013,'#4bacc6']];
  let svg = '<rect x=".5" y=".5" width="508" height="188" fill="#000" stroke="#8a8a8a"/>';
  for (let v = 0; v <= 4500; v += 500) {
    const y = yZero - v * perUnit;
    svg += `<line x1="${x0 - 2}" x2="${x1}" y1="${y}" y2="${y}" stroke="#cfcfcf" stroke-width=".9"/>`;
    svg += `<text x="${x0 - 4}" y="${y + 2}" fill="#bdbdbd" font-size="5.4" text-anchor="end" letter-spacing=".3">${v}</text>`;
  }
  svg += `<line x1="${x0}" x2="${x0}" y1="${yZero - 164.3}" y2="${yZero + 2}" stroke="#cfcfcf"/>`;
  let labels = '';
  months.forEach((m, i) => {
    const gx = x0 + i * groupW;
    svg += `<line x1="${gx + groupW}" x2="${gx + groupW}" y1="${yZero}" y2="${yZero + 2}" stroke="#cfcfcf"/>`;
    series.forEach(([data, color], k) => {
      const v = data[i];
      if (!v) return;
      const bx = gx + pad + k * barW, h = v * perUnit;
      svg += `<rect x="${bx}" y="${yZero - h}" width="${barW}" height="${h}" fill="${color}"/>`;
      labels += `<text x="${bx + barW / 2}" y="${yZero - h - 3.5}" fill="#fff" font-size="5.6" font-weight="700" text-anchor="middle">${v}</text>`;
    });
    svg += `<text x="${gx + groupW / 2}" y="${yZero + 10}" fill="#d8a98a" font-size="5.4" text-anchor="middle" letter-spacing=".3">${m}</text>`;
  });
  svg += labels;
  ['2009','2010','2011','2012','2013'].forEach((y, k) => {
    const ly = 70 + k * 11.9;
    svg += `<rect x="483" y="${ly - 2}" width="4" height="4" fill="${series[k][1]}"/>`;
    svg += `<text x="489" y="${ly + 2}" fill="#c9c9c9" font-size="5.4" letter-spacing=".3">${y}</text>`;
  });
  const chart = document.getElementById('chart');
  chart.setAttribute('font-family', 'Liberation Sans, sans-serif');
  chart.innerHTML = svg;

  // small tables
  const wpisy = [[7,0],[5,2],[6,0],[5,1],[3,3],[5,0],[1,4]];
  document.getElementById('t2b').innerHTML =
    '<tr class="h"><td class="hd">Wpisy na stronie głównej</td><td class="hd">Wpisy poza stroną główną</td></tr>' +
    wpisy.map(r => `<tr><td>${r[0]}</td><td>${r[1]}</td></tr>`).join('');

  const autorzy = [['','Kroeuliec',12,260],[1,'Ave3',9,61],[2,'diDziadek',8,180],[2,'macminik',8,120],[2,'Norbitor',8,94],[2,'zomo_pri',8,89],[3,'The_Game',7,19],[3,'lucas',7,17]];
  document.getElementById('t3b').innerHTML =
    '<tr class="h"><td></td><td class="hd">Autor</td><td class="hd">Wpisy</td><td class="hd">Komentarze</td></tr>' +
    autorzy.map((r, i) => `<tr class="${i === 0 ? 'first' : ''}"><td class="idx">${r[0]}</td><td class="tl ${i === 0 ? 'dim' : ''}">${r[1]}</td><td class="${i === 0 ? 'dim' : ''}">${r[2]}</td><td class="${i === 0 ? 'dim' : ''}">${r[3]}</td></tr>`).join('');

  const tytuly = [
    [1,'Toshiba U925T - after dead - cz. 3 czyli Ubuntu','januszek',203],
    [2,'Desktopie linuksowy! Przybywaj!','d0m4r',100],
    [3,'Nowy OS X 10.9 system specjalnie dla... powerlamerów?','Xanthia',93],
    [4,'Windows i wirus, razem?','Scorpions.8',82],
    [5,'Quo vadis Ubuntu, czyli jak powstał Mac OS X dla biednych','mati75',71],
    [6,'Dzień, w którym skończył się wykop? Afera zbożowa','Xanthia',67]];
  document.getElementById('t4b').innerHTML =
    '<tr class="h"><td></td><td class="hd">Tytuł</td><td class="hd">Autor</td><td class="hd">Komentarze</td><td class="hd">Strona główna</td></tr>' +
    tytuly.map(r => `<tr><td class="idx">${r[0]}</td><td class="tl">${r[1]}</td><td class="tl">${r[2]}</td><td>${r[3]}</td><td>tak</td></tr>`).join('');
</script>
</body>
</html>
